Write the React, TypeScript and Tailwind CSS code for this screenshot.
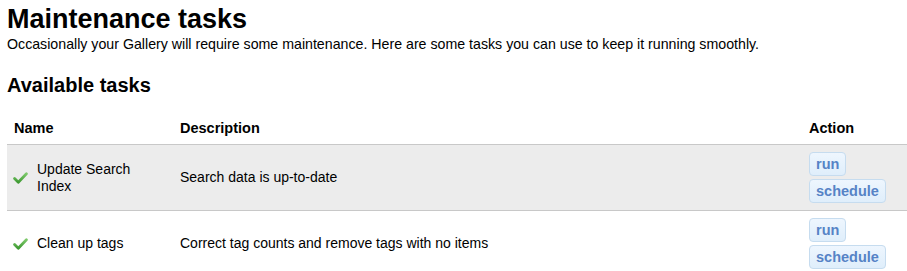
const tasks = [
  { name: "Update Search Index", description: "Search data is up-to-date", shaded: true },
  { name: "Clean up tags", description: "Correct tag counts and remove tags with no items", shaded: false },
];

function Check() {
  return (
    <svg width="15" height="12" viewBox="0 0 15 12" className="shrink-0">
      <defs>
        <linearGradient id="chk" x1="0" y1="0" x2="0" y2="1">
          <stop offset="0" stopColor="#7cc86a" />
          <stop offset="1" stopColor="#3f9a33" />
        </linearGradient>
      </defs>
      <path d="M1.6 6.6 L5.3 10.2 L13.4 1.8" fill="none" stroke="url(#chk)" strokeWidth="2.8" strokeLinecap="round" strokeLinejoin="round" />
    </svg>
  );
}

function ActionButton({ label }: { label: string }) {
  return (
    <button
      type="button"
      className="self-start rounded-[4px] border border-[#c6dcef] bg-gradient-to-b from-[#eef6fe] to-[#dfeefb] px-[6px] py-[2px] text-[14.5px] font-bold leading-[18px] text-[#5683c6]"
    >
      {label}
    </button>
  );
}

export default function App() {
  return (
    <div className="bg-white pl-[7px] pt-[4px] font-['Liberation_Sans',Arial,sans-serif] text-black">
      <h1 className="text-[27px] font-bold leading-[31px]">Maintenance tasks</h1>
      <p className="mt-[1px] text-[14.2px] leading-[16px]">
        Occasionally your Gallery will require some maintenance. Here are some tasks you can use to keep it running smoothly.
      </p>
      <h2 className="mt-[21px] text-[20px] font-bold leading-[24px]">Available tasks</h2>
      <table className="mt-[15px] w-full border-collapse text-[14px] leading-[17px]">
        <thead>
          <tr className="border-b border-[#c8c8c8] text-left">
            <th className="w-[166px] px-[7px] pb-[8px] pt-[8px] text-[14.5px] font-bold leading-[16px]">Name</th>
            <th className="px-[7px] pb-[8px] pt-[8px] text-[14.5px] font-bold leading-[16px]">Description</th>
            <th className="w-[100px] px-[2px] pb-[8px] pt-[8px] text-[14.5px] font-bold leading-[16px]">Action</th>
          </tr>
        </thead>
        <tbody>
          {tasks.map((t) => (
            <tr key={t.name} className={t.shaded ? "border-b border-[#c8c8c8] bg-[#ececec]" : ""}>
              <td className="px-[6px] py-[7px]">
                <div className="flex items-center gap-[9px]">
                  <Check />
                  <span className="max-w-[100px]">{t.name}</span>
                </div>
              </td>
              <td className="px-[7px] py-[7px]">{t.description}</td>
              <td className="px-[2px] py-[7px]">
                <div className="flex flex-col gap-[3px]">
                  <ActionButton label="run" />
                  <ActionButton label="schedule" />
                </div>
              </td>
            </tr>
          ))}
        </tbody>
      </table>
    </div>
  );
}
